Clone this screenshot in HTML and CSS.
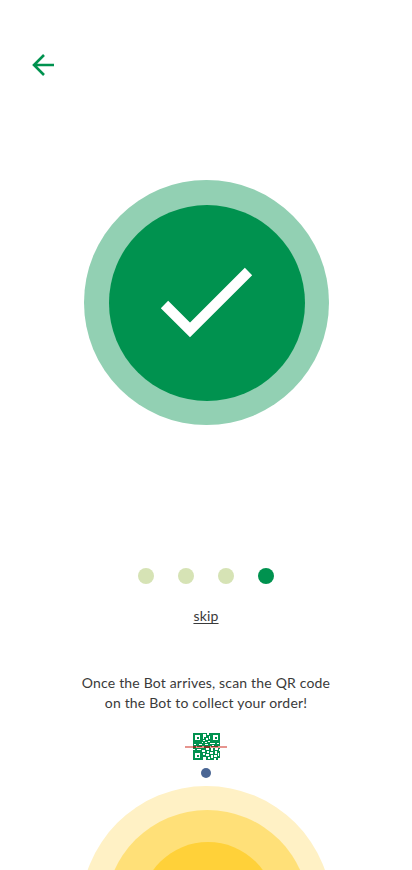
FILE: index.html
```
<!DOCTYPE html>
<html lang="en">
<head>
<meta charset="utf-8">
<meta name="viewport" content="width=device-width, initial-scale=1">
<title>Order on its way</title>
<link rel="stylesheet" href="styles.css">
</head>
<body>
<main class="screen">
  <header class="topbar">
    <a class="back" href="#" aria-label="Back">
      <svg width="24" height="24" viewBox="0 0 24 24"><path d="M22 12H3M12 2 2 12l10 10" fill="none" stroke="#00924f" stroke-width="2.6"/></svg>
    </a>
  </header>
  <svg class="success" width="245" height="245" viewBox="0 0 245 245">
    <circle cx="122.5" cy="122.5" r="122.5" fill="#92d0b3"/>
    <circle cx="123" cy="123" r="98" fill="#00924f"/>
    <path d="M80.5 124.5 106 150 164.5 91.5" fill="none" stroke="#fff" stroke-width="10.4"/>
  </svg>
  <div class="dots"><i class="dot"></i><i class="dot"></i><i class="dot"></i><i class="dot active"></i></div>
  <a class="skip" href="#">skip</a>
  <p class="message"><span class="line">Once the Bot arrives, scan the QR code</span><span class="line">on the Bot to collect your order!</span></p>
  <svg class="qr" width="42" height="28" viewBox="0 0 42 28" shape-rendering="crispEdges">
    <path fill="#00924f" d="M8 0h27v27H8z"/>
    <g fill="#fff">
      <path fill-rule="evenodd" d="M10 2h5v5h-5zM12 4v2h2V4zM28 2h5v5h-5zM30 4v2h2V4zM10 20h5v5h-5zM12 22v2h2v-2z"/>
      <path d="M18 1h3v3h-2v2h-1zM22 0h2v2h-2zM21 5h2v2h-2zM24 3h1v3h-1zM18 7h2v1h-2zM23 8h2v1h-2zM17 9h1v1h-1zM20 9h2v1h-2zM25 10h5v1h-5zM32 10h2v1h-2zM9 11h2v1H9zM14 11h3v1h-3zM20 11h3v1h-3zM27 12h2v1h-2zM8 16h2v1H8zM12 16h4v1h-4zM17 17h3v2h-3zM21 15h3v2h-3zM26 15h2v3h-2zM30 15h3v2h-3zM34 16h1v2h-1zM18 20h2v2h-2zM22 18h2v2h-2zM21 21h3v2h-3zM25 19h3v2h-3zM30 18h2v3h-2zM33 20h1v3h-1zM18 24h3v3h-3zM23 24h2v2h-2zM26 22h2v3h-2zM29 22h3v2h-3zM29 25h2v2h-2zM33 25h2v2h-2z"/>
    </g>
    <path fill="#e6958f" d="M0 13h42v2H0z"/>
    <path fill="#7c3823" d="M8 13h3v2H8zM12 13h5v1h-5zM19 13h6v2h-6zM26 13h7v1h-7z"/>
  </svg>
  <i class="bot"></i>
  <svg class="rings" width="260" height="84" viewBox="76 786 260 84">
    <circle cx="206.3" cy="911.8" r="125.8" fill="#fff1c5"/>
    <circle cx="207.3" cy="911.8" r="101.8" fill="#ffe078"/>
    <circle cx="208" cy="909.6" r="67.6" fill="#ffd139"/>
  </svg>
</main>
</body>
</html>
```
FILE: styles.css
```
* { box-sizing: border-box; }
body { margin: 0; background: #fff; }
.screen {
  width: 412px;
  height: 870px;
  overflow: hidden;
  display: flex;
  flex-direction: column;
  align-items: center;
  font-family: Lato, sans-serif;
  font-size: 14px;
  line-height: 20px;
  letter-spacing: .18px;
  color: #3a3a3a;
}
.screen > * { flex-shrink: 0; }
.topbar { width: 100%; height: 180px; padding: 53px 32px 0; }
.back { display: block; width: 24px; height: 24px; }
.back svg, .success, .qr, .rings { display: block; }
.success { margin-left: 1px; }
.dots { display: flex; gap: 24px; margin-top: 143px; }
.dot { width: 16px; height: 16px; border-radius: 50%; background: #d6e3b5; }
.dot.active { background: #00924f; }
.skip { margin-top: 22px; color: inherit; text-underline-offset: 2px; text-decoration-skip-ink: none; }
.message { margin: 47px 0 0; text-align: center; }
.line { display: block; white-space: nowrap; }
.qr { margin-top: 20px; }
.bot { width: 10px; height: 10px; margin-top: 7px; border-radius: 50%; background: #4a6694; }
.rings { margin-top: 8px; }
```
